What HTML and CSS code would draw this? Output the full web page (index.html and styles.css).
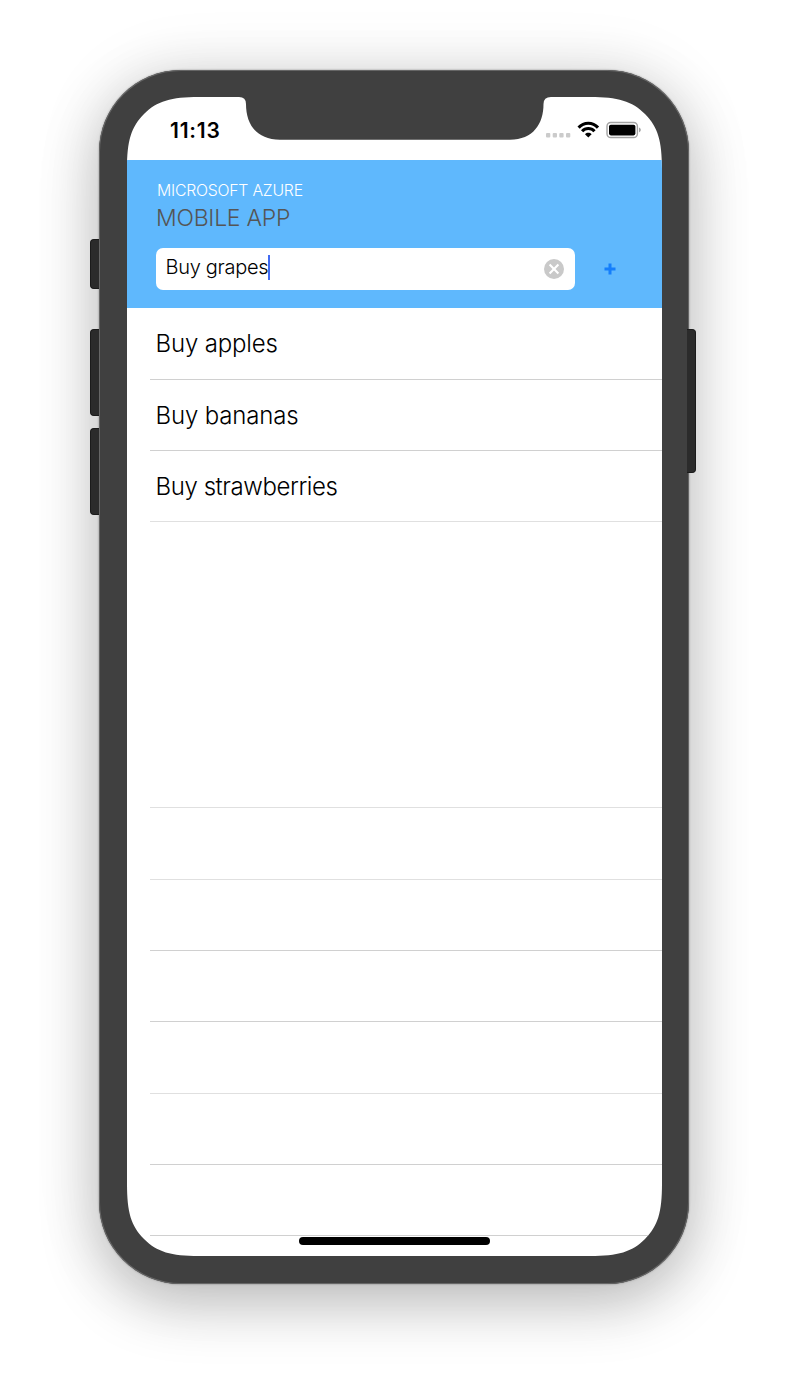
FILE: index.html
```html
<!DOCTYPE html>
<html lang="en">
<head>
<meta charset="utf-8">
<title>Mobile App</title>
<link rel="stylesheet" href="styles.css">
</head>
<body>
<main class="phone">
  <span class="side mute"></span>
  <span class="side vol-up"></span>
  <span class="side vol-down"></span>
  <span class="side power"></span>
  <section class="screen">
    <div class="status">
      <span class="time">11:13</span>
      <svg class="indicators" width="98" height="20" viewBox="0 0 98 20">
        <g fill="#cbcbcb">
          <rect x="1" y="13" width="4.3" height="4.5" rx="1"/>
          <rect x="7.7" y="13" width="4.3" height="4.5" rx="1"/>
          <rect x="14.3" y="13" width="4.3" height="4.5" rx="1"/>
          <rect x="21" y="13" width="4.3" height="4.5" rx="1"/>
        </g>
        <g fill="none" stroke="#000" stroke-width="3.1">
          <path d="M33.6 7.6C39 1.8 47.6 1.8 53 7.6"/>
          <path d="M37.1 11.2C40.5 7.6 46.1 7.6 49.5 11.2"/>
        </g>
        <path d="M40 14.2C41.8 12.3 44.8 12.3 46.6 14.2L43.3 17.6Z"/>
        <rect x="62" y="2.5" width="30.4" height="15" rx="3.8" fill="#fff" stroke="#a3a3a3" stroke-width="1.4"/>
        <rect x="64" y="4.7" width="26.4" height="10.7" rx="1.8"/>
        <path d="M94 7.6C96.4 8.5 96.4 11.5 94 12.4Z" fill="#a3a3a3"/>
      </svg>
    </div>
    <header class="header">
      <p class="vendor">MICROSOFT AZURE</p>
      <h1 class="title">MOBILE APP</h1>
      <div class="entry">
        <div class="field">
          <span class="value">Buy grapes</span><span class="caret"></span>
          <svg class="clear" width="20" height="20" viewBox="0 0 20 20">
            <circle cx="10" cy="10" r="10" fill="#c9c9c9"/>
            <path d="M5.6 5.6L14.4 14.4M14.4 5.6L5.6 14.4" stroke="#fff" stroke-width="2.1"/>
          </svg>
        </div>
        <svg class="add" width="12" height="12" viewBox="0 0 12 12">
          <path d="M6 0.5V11.5M0.5 6H11.5" stroke="#157efb" stroke-width="3"/>
        </svg>
      </div>
    </header>
    <ul class="list">
      <li>Buy apples</li>
      <li>Buy bananas</li>
      <li class="tight">Buy strawberries</li>
      <li class="gap"></li>
      <li></li>
      <li></li>
      <li></li>
      <li></li>
      <li></li>
      <li></li>
    </ul>
    <span class="home"></span>
  </section>
</main>
</body>
</html>
```
FILE: styles.css
```css
* { box-sizing: border-box; }
body {
  margin: 0;
  height: 1386px;
  padding: 70px 99px 0;
  background: #fff;
  overflow: hidden;
  font-family: Inter, "Liberation Sans", sans-serif;
}
.phone {
  position: relative;
  width: 590px;
  height: 1214px;
  padding: 27px 27px 28px 28px;
  border-radius: 82px;
  background: #404040;
  box-shadow: inset 0 0 0 1px #666, 0 0 2px rgba(0,0,0,.4), 0 20px 60px rgba(0,0,0,.24), 0 0 70px rgba(0,0,0,.09);
}
.side {
  position: absolute;
  left: -9px;
  width: 9px;
  background: #2b2b2b;
  border: 1px solid #1b1b1b;
  border-right: 0;
  border-radius: 4px 0 0 4px;
}
.mute { top: 169px; height: 50px; }
.vol-up { top: 259px; height: 87px; }
.vol-down { top: 358px; height: 87px; }
.power {
  top: 259px;
  left: 588px;
  height: 144px;
  border: 1px solid #1b1b1b;
  border-left: 0;
  border-radius: 0 4px 4px 0;
}
.screen {
  position: relative;
  display: flex;
  flex-direction: column;
  width: 535px;
  height: 1159px;
  background: #fff;
  clip-path: path("M0 72C0 44 4 30 17 17C30 4 44 0 72 0H112Q119 0 119 7C119 27 129 42.7 153 42.7H383C406 42.7 416.5 27 416.5 7Q416.5 0 424 0H463C491 0 505 4 518 17C531 30 535 44 535 72V1087C535 1115 531 1129 518 1142C505 1155 491 1159 463 1159H72C44 1159 30 1155 17 1142C4 1129 0 1115 0 1087Z");
}
.status {
  display: flex;
  flex: none;
  justify-content: space-between;
  height: 63px;
  padding: 22px 19px 0 43px;
}
.time {
  font-size: 21px;
  font-weight: 600;
  line-height: 23px;
  letter-spacing: .8px;
}
.indicators { margin-top: 1px; }
.header {
  flex: none;
  height: 148px;
  padding: 20px 29px 0;
  background: #5fb8fd;
}
.vendor {
  margin: 0 0 0 1px;
  color: #fff;
  font-size: 15.8px;
  font-weight: 300;
  line-height: 22px;
  letter-spacing: -.22px;
}
.title {
  margin: 3px 0 0;
  color: #555;
  font-size: 23px;
  font-weight: 300;
  line-height: 26px;
  letter-spacing: -.25px;
}
.entry {
  display: flex;
  align-items: center;
  gap: 29px;
  margin-top: 16.6px;
}
.field {
  display: flex;
  align-items: center;
  width: 419px;
  height: 42px;
  padding: 0 11px 0 9.5px;
  background: #fff;
  border-radius: 7px;
  font-size: 20px;
  font-weight: 300;
  letter-spacing: -.3px;
}
.value { margin-top: -3px; }
.caret { width: 2px; height: 25px; margin-top: -3px; background: #426bf2; }
.clear { margin-left: auto; }
.list {
  margin: 0;
  padding: 0 0 0 23px;
  list-style: none;
}
.list li {
  display: flex;
  align-items: center;
  height: 71px;
  padding-left: 5.5px;
  border-bottom: 1px solid #d0d0d0;
  font-size: 24px;
  font-weight: 300;
  letter-spacing: -.16px;
}
.list li:nth-child(1),
.list li:nth-child(5),
.list li:nth-child(8) { height: 72px; }
.list li:nth-child(3),
.list li:nth-child(4),
.list li:nth-child(5),
.list li:nth-child(8) { border-color: #e0e0e0; }
.list li.gap { height: 286px; }
.list li.tight { letter-spacing: -.42px; }
.home {
  position: absolute;
  left: 172px;
  bottom: 11px;
  width: 191px;
  height: 8px;
  border-radius: 4px;
  background: #000;
}
```
